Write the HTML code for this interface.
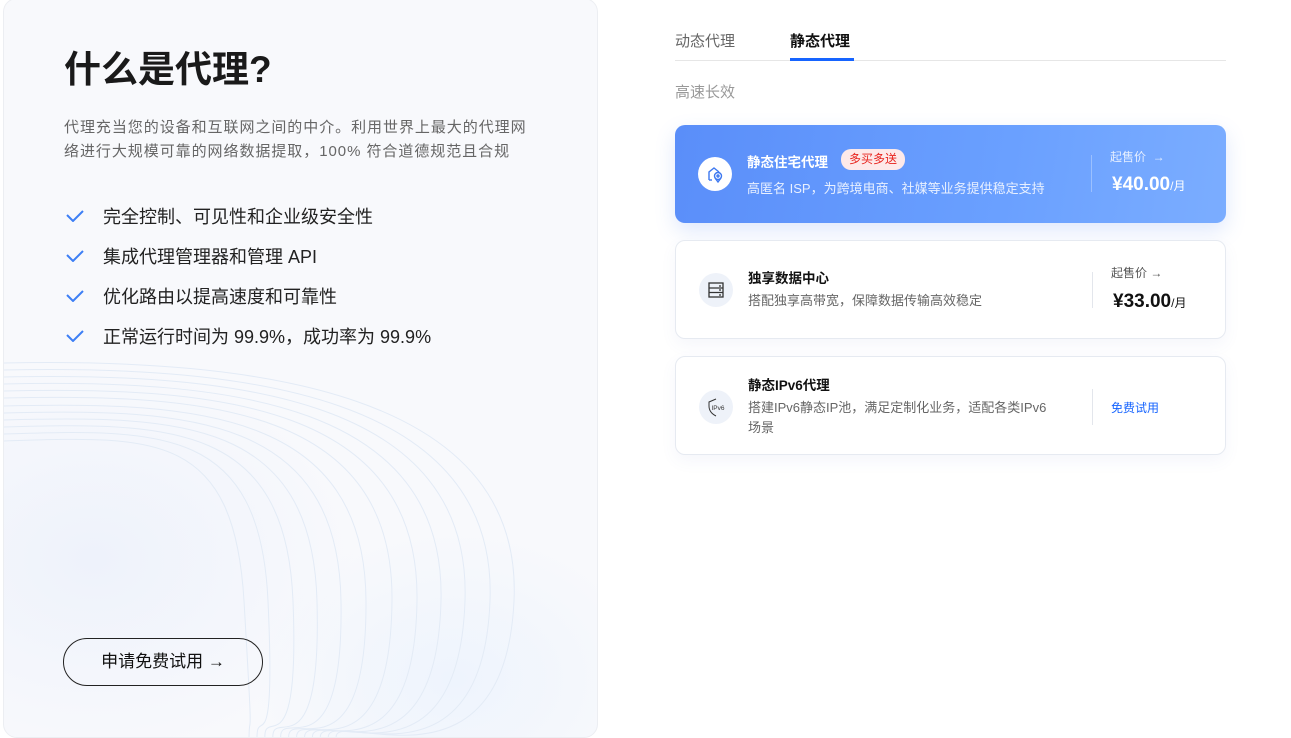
<!DOCTYPE html>
<html><head><meta charset="utf-8"><style>
*{margin:0;padding:0;box-sizing:border-box}
body{width:1291px;height:734px;overflow:hidden;background:#fff;font-family:"Liberation Sans","Noto Sans CJK SC",sans-serif;position:relative;color:#222}
.abs{position:absolute;white-space:nowrap}
#left{position:absolute;left:3px;top:-2px;width:595px;height:740px;border:1px solid #eceef2;border-radius:14px;background:radial-gradient(ellipse 260px 200px at 90px 560px,#eef2fb,transparent),radial-gradient(ellipse 200px 150px at 450px 680px,#eef4fd,transparent),#f8f9fc;overflow:hidden}
.chk{position:absolute;left:66px;width:18px;height:12px}
.li{left:103px;font-size:18px;color:#222}
.card{position:absolute;left:675px;width:551px;height:99px;border:1px solid #e6eaf1;border-radius:10px;background:#fff;box-shadow:0 6px 16px rgba(80,110,180,0.06)}
.ic{position:absolute;left:23px;width:34px;height:34px;border-radius:50%;background:#eef2f9}
.tt{position:absolute;left:72px;font-size:13.5px;font-weight:bold;color:#111}
.ds{position:absolute;left:72px;font-size:13px;color:#666;line-height:20px}
.dv{position:absolute;left:416px;width:1px;background:#e3e6ec}
.sp{position:absolute;left:435px;font-size:12px;color:#555}
.pr{position:absolute;left:437px;font-size:19px;color:#111;font-weight:bold}
.pr small{font-size:12px;font-weight:normal}
</style></head><body>
<div id="left">
<svg width="595" height="740" style="position:absolute;left:0;top:0" fill="none" stroke="#e3ebf6" stroke-width="1">
<path d="M0 442 C150 437 230 432 240 602 S245 702 245 742"/>
<path d="M0 435 C159 430 256 428 264 602 S252 702 253 742"/>
<path d="M0 428 C168 423 282 425 289 602 S258 702 261 742"/>
<path d="M0 421 C177 416 308 421 313 602 S265 702 269 742"/>
<path d="M0 414 C186 409 334 418 337 602 S271 702 277 742"/>
<path d="M0 407 C195 402 361 414 362 602 S278 702 285 742"/>
<path d="M0 399 C205 394 390 410 388 602 S285 702 293 742"/>
<path d="M0 392 C214 387 416 406 413 602 S292 702 301 742"/>
<path d="M0 385 C223 380 442 403 437 602 S298 702 309 742"/>
<path d="M0 378 C232 373 468 399 461 602 S305 702 317 742"/>
<path d="M0 371 C241 366 494 396 486 602 S312 702 325 742"/>
<path d="M0 364 C250 359 520 392 510 602 S318 702 333 742"/>
</svg>
<div class="abs" style="left:60px;top:40px;font-size:37px;font-weight:bold;color:#1a1a1a">什么是代理?</div>
<div class="abs" style="left:60px;top:117px;font-size:15px;color:#666;line-height:24px;letter-spacing:0.95px">代理充当您的设备和互联网之间的中介。利用世界上最大的代理网<br>络进行大规模可靠的网络数据提取，100% 符合道德规范且合规</div>
<svg class="chk" style="top:211px;left:62px" viewBox="0 0 18 12"><path d="M1 5 L7 11 L17 1" stroke="#3d7ff5" stroke-width="2" fill="none"/></svg>
<svg class="chk" style="top:251px;left:62px" viewBox="0 0 18 12"><path d="M1 5 L7 11 L17 1" stroke="#3d7ff5" stroke-width="2" fill="none"/></svg>
<svg class="chk" style="top:291px;left:62px" viewBox="0 0 18 12"><path d="M1 5 L7 11 L17 1" stroke="#3d7ff5" stroke-width="2" fill="none"/></svg>
<svg class="chk" style="top:331px;left:62px" viewBox="0 0 18 12"><path d="M1 5 L7 11 L17 1" stroke="#3d7ff5" stroke-width="2" fill="none"/></svg>
<div class="abs li" style="top:204px;left:99px">完全控制、可见性和企业级安全性</div>
<div class="abs li" style="top:244px;left:99px">集成代理管理器和管理 API</div>
<div class="abs li" style="top:284px;left:99px">优化路由以提高速度和可靠性</div>
<div class="abs li" style="top:324px;left:99px">正常运行时间为 99.9%，成功率为 99.9%</div>
<div class="abs" style="left:59px;top:639px;width:200px;height:48px;border:1px solid #222;border-radius:24px;text-align:center;line-height:46px;font-size:17px;color:#111">申请免费试用 →</div>
</div>

<div class="abs" style="left:675px;top:30px;font-size:15px;color:#666">动态代理</div>
<div class="abs" style="left:790px;top:30px;font-size:15px;font-weight:bold;color:#111">静态代理</div>
<div class="abs" style="left:675px;top:60px;width:551px;height:1px;background:#e6e6e6"></div>
<div class="abs" style="left:790px;top:58px;width:64px;height:3px;background:#1664ff"></div>
<div class="abs" style="left:675px;top:81px;font-size:15px;color:#999">高速长效</div>

<div class="card" style="top:125px;height:98px;border:none;background:linear-gradient(100deg,#5a8ef9,#6aa0ff 60%,#7badff);box-shadow:0 8px 20px rgba(80,130,240,0.18)">
 <div class="ic" style="top:32px;background:#fff"><svg width="34" height="34" viewBox="0 0 34 34" fill="none" stroke="#3d78f0" stroke-width="1.4"><path d="M11 23 V15 L16 11 L21 15"/><path d="M11 23 H14"/><circle cx="20" cy="19" r="3.5"/><circle cx="20" cy="19" r="1"/><path d="M17 21 L20 25 L23 21"/></svg></div>
 <div class="tt" style="top:26px;color:#fff">静态住宅代理</div>
 <div class="abs" style="left:166px;top:24px;width:64px;height:21px;border-radius:10px;background:#fde9e9;color:#e8251f;font-size:12px;text-align:center;line-height:21px">多买多送</div>
 <div class="ds" style="top:54px;color:#e8f0ff">高匿名 ISP，为跨境电商、社媒等业务提供稳定支持</div>
 <div class="dv" style="top:30px;height:37px;background:rgba(255,255,255,0.3)"></div>
 <div class="sp" style="top:23px;color:#e6efff">起售价 &nbsp;→</div>
 <div class="pr" style="top:49px;color:#fff">¥40.00<small>/月</small></div>
</div>

<div class="card" style="top:240px">
 <div class="ic" style="top:32px"><svg width="34" height="34" viewBox="0 0 34 34" fill="none" stroke="#333" stroke-width="1.3"><rect x="10" y="10" width="14" height="14"/><path d="M10 15 H24 M10 19.5 H24 M20 13 H22 M20 17 H22 M20 22 H22"/></svg></div>
 <div class="tt" style="top:26px">独享数据中心</div>
 <div class="ds" style="top:50px">搭配独享高带宽，保障数据传输高效稳定</div>
 <div class="dv" style="top:31px;height:36px"></div>
 <div class="sp" style="top:23px">起售价 →</div>
 <div class="pr" style="top:50px">¥33.00<small>/月</small></div>
</div>

<div class="card" style="top:356px">
 <div class="ic" style="top:33px"><svg width="34" height="34" viewBox="0 0 34 34" fill="none" stroke="#333" stroke-width="1"><path d="M17 9 L10 12 V16 C10 21 13 24 17 26"/><text x="12.5" y="20" font-size="6.5" fill="#333" stroke="none" font-family="Liberation Sans">IPv6</text></svg></div>
 <div class="tt" style="top:17px">静态IPv6代理</div>
 <div class="ds" style="top:41px">搭建IPv6静态IP池，满足定制化业务，适配各类IPv6<br>场景</div>
 <div class="dv" style="top:32px;height:36px"></div>
 <div class="sp" style="top:42px;color:#1664ff;font-size:12px">免费试用</div>
</div>
</body></html>
